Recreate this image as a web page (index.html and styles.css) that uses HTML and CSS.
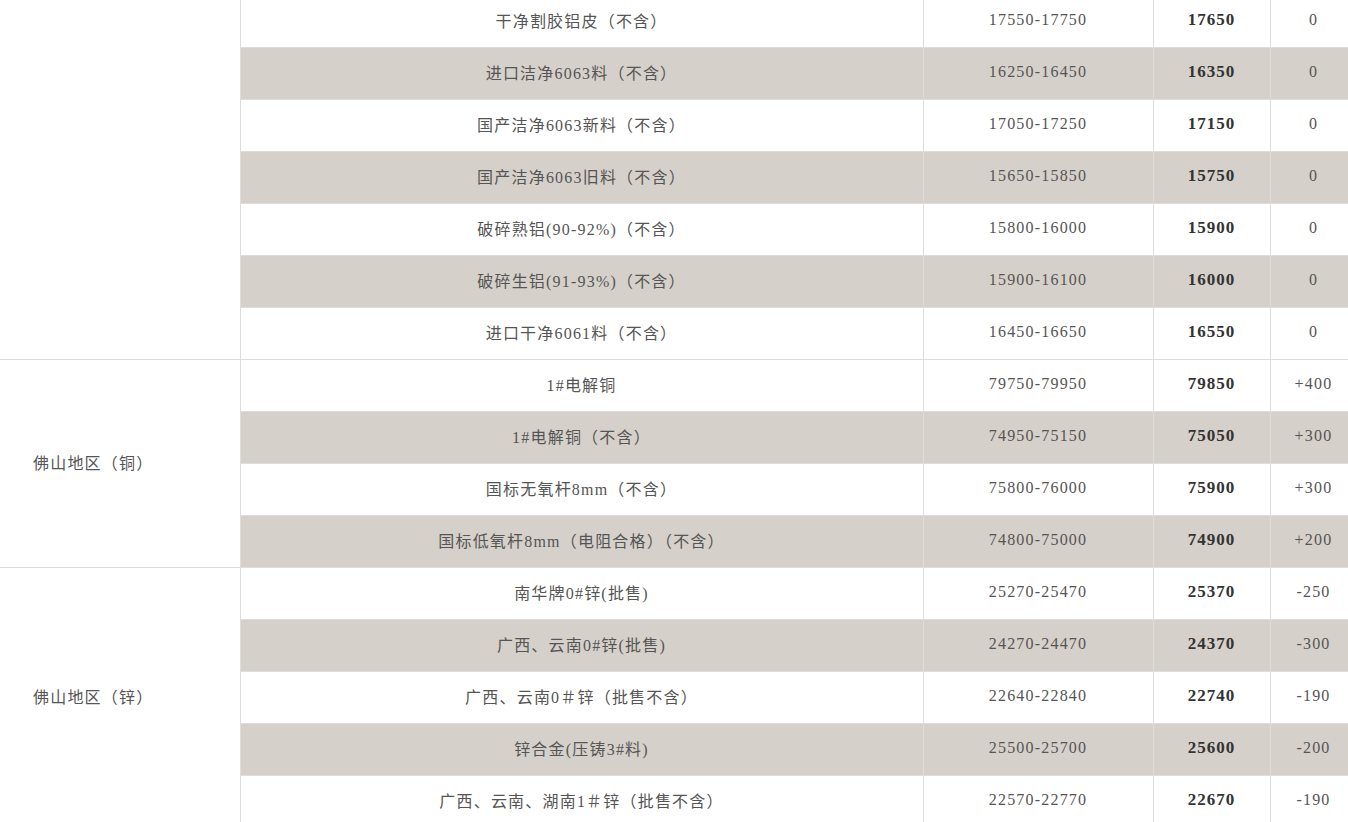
FILE: index.html
```html
<!DOCTYPE html>
<html lang="zh">
<head>
<meta charset="utf-8">
<title>价格表</title>
<link rel="stylesheet" href="styles.css">
</head>
<body>
<div class="wrap">
<table class="price">
<colgroup>
<col class="c1"><col class="c2"><col class="c3"><col class="c4"><col class="c5">
</colgroup>
<tbody>
<tr><td class="area" rowspan="7"></td><td>干净割胶铝皮（不含）</td><td>17550-17750</td><td class="mid">17650</td><td>0</td></tr>
<tr class="alt"><td>进口洁净6063料（不含）</td><td>16250-16450</td><td class="mid">16350</td><td>0</td></tr>
<tr><td>国产洁净6063新料（不含）</td><td>17050-17250</td><td class="mid">17150</td><td>0</td></tr>
<tr class="alt"><td>国产洁净6063旧料（不含）</td><td>15650-15850</td><td class="mid">15750</td><td>0</td></tr>
<tr><td>破碎熟铝(90-92%)（不含）</td><td>15800-16000</td><td class="mid">15900</td><td>0</td></tr>
<tr class="alt"><td>破碎生铝(91-93%)（不含）</td><td>15900-16100</td><td class="mid">16000</td><td>0</td></tr>
<tr><td>进口干净6061料（不含）</td><td>16450-16650</td><td class="mid">16550</td><td>0</td></tr>

<tr><td class="area" rowspan="4">佛山地区（铜）</td><td>1#电解铜</td><td>79750-79950</td><td class="mid">79850</td><td>+400</td></tr>
<tr class="alt"><td>1#电解铜（不含）</td><td>74950-75150</td><td class="mid">75050</td><td>+300</td></tr>
<tr><td>国标无氧杆8mm（不含）</td><td>75800-76000</td><td class="mid">75900</td><td>+300</td></tr>
<tr class="alt"><td>国标低氧杆8mm（电阻合格）（不含）</td><td>74800-75000</td><td class="mid">74900</td><td>+200</td></tr>

<tr><td class="area" rowspan="5">佛山地区（锌）</td><td>南华牌0#锌(批售)</td><td>25270-25470</td><td class="mid">25370</td><td>-250</td></tr>
<tr class="alt"><td>广西、云南0#锌(批售)</td><td>24270-24470</td><td class="mid">24370</td><td>-300</td></tr>
<tr><td>广西、云南0＃锌（批售不含）</td><td>22640-22840</td><td class="mid">22740</td><td>-190</td></tr>
<tr class="alt"><td>锌合金(压铸3#料)</td><td>25500-25700</td><td class="mid">25600</td><td>-200</td></tr>
<tr><td>广西、云南、湖南1＃锌（批售不含）</td><td>22570-22770</td><td class="mid">22670</td><td>-190</td></tr>
</tbody>
</table>
</div>
</body>
</html>
```

FILE: styles.css
```css
html, body {
  margin: 0;
  padding: 0;
  background: #ffffff;
  overflow: hidden;
}

.wrap {
  width: 1348px;
  overflow: hidden;
}

.price {
  margin-top: -5px;
  width: 1357px;
  border-collapse: collapse;
  table-layout: fixed;
  font-family: "Liberation Serif", "Noto Sans CJK SC", serif;
  font-size: 16px;
  letter-spacing: 1.2px;
  color: #555555;
}

.c1 { width: 240px; }
.c2 { width: 683px; }
.c3 { width: 230px; }
.c4 { width: 117px; }
.c5 { width: 87px; }

.price tr {
  height: 52px;
}

.price td {
  border: 1px solid #dddddd;
  padding: 0 0 3px 0;
  text-align: center;
  vertical-align: middle;
  background: #ffffff;
}

.price tr.alt td {
  background: #d5d0c9;
}

.price td.area {
  text-align: left;
  padding-left: 33px;
  border-left: none;
  background: #ffffff;
}

.price td.mid {
  font-size: 17px;
  letter-spacing: 1px;
  font-weight: bold;
  color: #333333;
}
```
